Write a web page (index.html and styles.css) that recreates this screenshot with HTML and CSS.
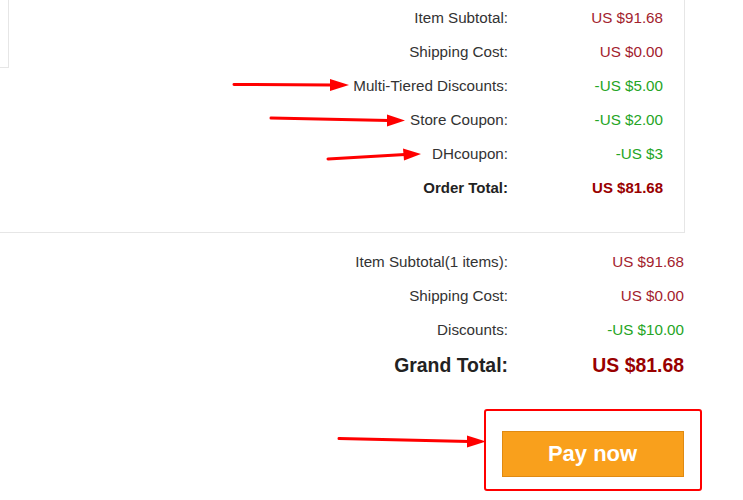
FILE: index.html
```html
<!DOCTYPE html>
<html>
<head>
<meta charset="utf-8">
<link rel="stylesheet" href="styles.css">
</head>
<body>
<div class="page">
  <div class="order-box">
    <div class="note-box"></div>
    <div class="summary">
      <div class="label">Item Subtotal:</div><div class="value price">US $91.68</div>
      <div class="label">Shipping Cost:</div><div class="value price">US $0.00</div>
      <div class="label">Multi-Tiered Discounts:</div><div class="value discount">-US $5.00</div>
      <div class="label">Store Coupon:</div><div class="value discount">-US $2.00</div>
      <div class="label">DHcoupon:</div><div class="value discount">-US $3</div>
      <div class="label strong">Order Total:</div><div class="value price strong">US $81.68</div>
    </div>
  </div>

  <div class="totals">
    <div class="label">Item Subtotal(1 items):</div><div class="value price">US $91.68</div>
    <div class="label">Shipping Cost:</div><div class="value price">US $0.00</div>
    <div class="label">Discounts:</div><div class="value discount">-US $10.00</div>
    <div class="label grand">Grand Total:</div><div class="value price grand">US $81.68</div>
  </div>

  <div class="pay-highlight">
    <button class="pay-btn">Pay now</button>
  </div>

  <svg class="annotations" width="743" height="500" viewBox="0 0 743 500">
    <g stroke="#ff0000" stroke-width="3" stroke-linecap="round" fill="#ff0000">
      <line x1="234" y1="84.5" x2="332" y2="85"/>
      <polygon points="330,79 349,85 330,91" stroke="none"/>
      <line x1="271" y1="118" x2="389" y2="120.5"/>
      <polygon points="387,114.5 405,120.5 387,126.5" stroke="none"/>
      <line x1="328" y1="159" x2="405" y2="154.5"/>
      <polygon points="403,148.5 421,154 404,160.5" stroke="none"/>
      <line x1="339" y1="438.5" x2="469" y2="441.5"/>
      <polygon points="467,435.5 486,441.5 467,447.5" stroke="none"/>
    </g>
  </svg>
</div>
</body>
</html>
```

FILE: styles.css
```css
html, body {
  margin: 0;
  padding: 0;
  background: #ffffff;
}

.page {
  position: relative;
  width: 743px;
  height: 500px;
  overflow: hidden;
  font-family: "Liberation Sans", Arial, sans-serif;
  font-size: 15.2px;
  color: #333333;
}

.order-box {
  display: flex;
  margin-left: -1px;
  width: 686px;
  box-sizing: border-box;
  border: 1px solid #e6e6e6;
  border-top: 0;
  padding-bottom: 28px;
}

.note-box {
  flex: none;
  width: 10px;
  height: 68px;
  margin-left: -1px;
  box-sizing: border-box;
  border: 1px solid #e6e6e6;
  border-top: 0;
  border-left: 0;
  align-self: flex-start;
}

.summary {
  display: grid;
  grid-template-columns: 499px 155px;
  grid-auto-rows: 34px;
  align-items: center;
}

.totals {
  display: grid;
  grid-template-columns: 508px 176px;
  grid-template-rows: 34px 34px 34px 38px;
  align-items: center;
  margin-top: 11px;
}

.label {
  text-align: right;
  color: #333333;
}

.value {
  text-align: right;
}

.price {
  color: #a3222e;
}

.discount {
  color: #25a525;
}

.strong {
  font-weight: bold;
  font-size: 15px;
  color: #222222;
}

.price.strong {
  color: #990000;
}

.grand {
  font-weight: bold;
  font-size: 19.4px;
  color: #222222;
}

.price.grand {
  color: #990000;
}

.pay-highlight {
  margin-top: 25px;
  margin-left: 484px;
  width: 218px;
  height: 82px;
  box-sizing: border-box;
  border: 2.5px solid #ff0000;
  border-radius: 3px;
  padding: 19.5px 15.5px 11.5px 15.5px;
}

.pay-btn {
  display: block;
  width: 182px;
  height: 46px;
  margin: 0;
  padding: 0;
  box-sizing: border-box;
  background: #f9a01c;
  border: 1px solid #e08a12;
  color: #ffffff;
  font-family: "Liberation Sans", Arial, sans-serif;
  font-weight: bold;
  font-size: 22px;
  text-align: center;
}

.annotations {
  position: absolute;
  top: 0;
  left: 0;
  pointer-events: none;
}
```
